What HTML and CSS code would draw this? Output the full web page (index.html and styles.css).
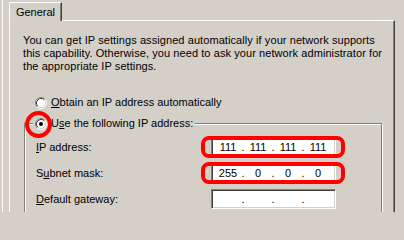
FILE: index.html
```html
<!DOCTYPE html>
<html>
<head>
<meta charset="utf-8">
<link rel="stylesheet" href="styles.css">
</head>
<body>
<div class="frame">
  <div class="tabs"><div class="tab">General</div></div>
  <div class="panel">
    <p class="desc">You can get IP settings assigned automatically if your network supports<br>this capability. Otherwise, you need to ask your network administrator for<br>the appropriate IP settings.</p>
    <div class="option">
      <span class="radio"><svg width="12" height="12" viewBox="0 0 12 12"><circle cx="6" cy="6" r="5" fill="#fff"/><path d="M2.11 9.89 A5.5 5.5 0 0 1 9.89 2.11" stroke="#808080" fill="none"/><path d="M2.11 9.89 A5.5 5.5 0 0 0 9.89 2.11" stroke="#fff" fill="none"/><path d="M2.82 9.18 A4.5 4.5 0 0 1 9.18 2.82" stroke="#404040" fill="none"/><path d="M2.82 9.18 A4.5 4.5 0 0 0 9.18 2.82" stroke="#d4d0c8" fill="none"/></svg></span>
      <span><u>O</u>btain an IP address automatically</span>
    </div>
    <div class="group">
      <div class="legend">
        <span class="radio"><svg width="12" height="12" viewBox="0 0 12 12"><circle cx="6" cy="6" r="5" fill="#fff"/><path d="M2.11 9.89 A5.5 5.5 0 0 1 9.89 2.11" stroke="#808080" fill="none"/><path d="M2.11 9.89 A5.5 5.5 0 0 0 9.89 2.11" stroke="#fff" fill="none"/><path d="M2.82 9.18 A4.5 4.5 0 0 1 9.18 2.82" stroke="#404040" fill="none"/><path d="M2.82 9.18 A4.5 4.5 0 0 0 9.18 2.82" stroke="#d4d0c8" fill="none"/><circle cx="6" cy="6" r="2" fill="#000"/></svg><span class="ring"></span></span>
        <span>U<u>s</u>e the following IP address:</span>
      </div>
      <div class="row">
        <span class="lbl"><u>I</u>P address:</span>
        <div class="ipwrap">
          <div class="ip"><span>111</span><span>.</span><span>111</span><span>.</span><span>111</span><span>.</span><span>111</span></div>
          <span class="hl"></span>
        </div>
      </div>
      <div class="row">
        <span class="lbl">S<u>u</u>bnet mask:</span>
        <div class="ipwrap">
          <div class="ip"><span>255</span><span>.</span><span>0</span><span>.</span><span>0</span><span>.</span><span>0</span></div>
          <span class="hl"></span>
        </div>
      </div>
      <div class="row">
        <span class="lbl"><u>D</u>efault gateway:</span>
        <div class="ipwrap">
          <div class="ip"><span></span><span>.</span><span></span><span>.</span><span></span><span>.</span><span></span></div>
        </div>
      </div>
    </div>
  </div>
</div>
</body>
</html>
```

FILE: styles.css
```css
html, body {
  margin: 0;
  padding: 0;
  background: #d4d0c8;
  width: 404px;
  height: 212px;
  overflow: hidden;
}
body {
  font-family: "Liberation Sans", Arial, sans-serif;
  font-size: 11px;
  color: #000;
}
.frame {
  margin-left: 2px;
  border-left: 1px solid #fff;
  padding: 2px 0 0 6px;
  height: 210px;
  overflow: hidden;
}
.tabs {
  display: flex;
  height: 18px;
}
.tab {
  position: relative;
  z-index: 1;
  box-sizing: border-box;
  width: 53px;
  height: 19px;
  border-top: 1px solid #fff;
  border-left: 1px solid #fff;
  border-right: 1px solid #404040;
  border-top-left-radius: 2px;
  box-shadow: inset -1px 0 0 #808080;
  background: #d4d0c8;
  text-align: center;
  line-height: 17px;
  padding-top: 1px;
}
.panel {
  box-sizing: border-box;
  width: 386px;
  height: 192px;
  overflow: hidden;
  border-top: 1px solid #fff;
  border-left: 1px solid #fff;
  border-right: 1px solid #404040;
  box-shadow: inset -1px 0 0 #808080;
  padding: 13px 0 0 13px;
}
.desc {
  margin: 0;
  line-height: 13px;
  white-space: nowrap;
  letter-spacing: 0.08px;
}
.option {
  display: flex;
  align-items: center;
  margin: 23px 0 0 12px;
  line-height: 13px;
  height: 13px;
}
.radio {
  position: relative;
  width: 12px;
  height: 12px;
  margin-right: 4px;
  flex: none;
}
.radio svg {
  display: block;
}
.ring {
  position: absolute;
  left: -10px;
  top: -7px;
  width: 27px;
  height: 27px;
  box-sizing: border-box;
  border: 4px solid #f00;
  border-radius: 50%;
}
.group {
  box-sizing: border-box;
  width: 358px;
  margin: 14px 0 0 1px;
  border: 1px solid #808080;
  box-shadow: inset 1px 1px 0 #fff, 1px 1px 0 #fff;
  padding: 0 0 20px 0;
}
.legend {
  display: flex;
  width: fit-content;
  align-items: center;
  height: 13px;
  line-height: 13px;
  margin: -7px 0 0 8px;
  padding: 0 2px;
  background: #d4d0c8;
}
.row {
  display: flex;
  align-items: center;
  height: 20px;
  margin-top: 6px;
  padding-left: 11px;
}
.legend + .row {
  margin-top: 7px;
}
.lbl {
  width: 175px;
  flex: none;
}
.ipwrap {
  position: relative;
  width: 125px;
  height: 20px;
}
.ip {
  box-sizing: border-box;
  width: 125px;
  height: 20px;
  background: #fff;
  border: 1px solid;
  border-color: #808080 #fff #fff #808080;
  box-shadow: inset 1px 1px 0 #404040, inset -1px -1px 0 #d4d0c8;
  padding-left: 4px;
  display: grid;
  grid-template-columns: 24px 6px 24px 6px 24px 6px 24px;
  align-items: center;
  text-align: center;
  line-height: 18px;
}
.hl {
  position: absolute;
  left: -10px;
  right: -9px;
  top: -1px;
  bottom: -1px;
  border: 4px solid #f00;
  border-radius: 8px;
}
```
